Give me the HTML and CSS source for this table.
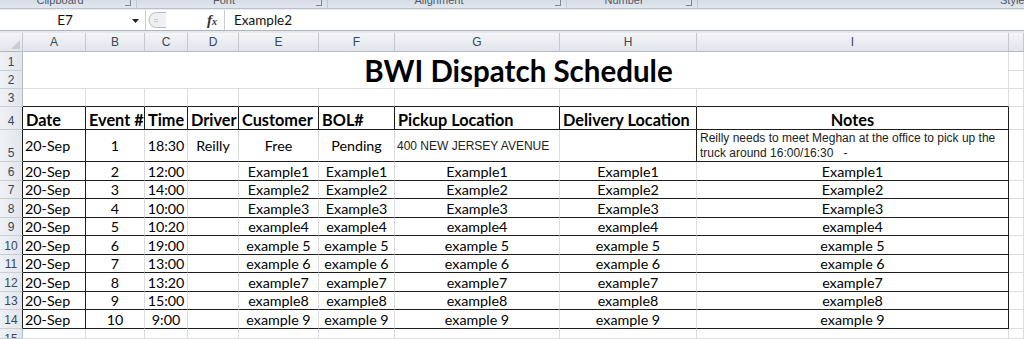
FILE: index.html
```html
<!DOCTYPE html>
<html>
<head>
<meta charset="utf-8">
<link rel="stylesheet" href="styles.css">
</head>
<body>
<div class="app">
  <div class="ribbon">
    <div class="grp g1"><span class="glabel">Clipboard</span><i class="launch"></i></div>
    <div class="grp g2"><span class="glabel">Font</span><i class="launch"></i></div>
    <div class="grp g3"><span class="glabel">Alignment</span><i class="launch"></i></div>
    <div class="grp g4"><span class="glabel">Number</span><i class="launch"></i></div>
    <div class="grp g5"><span class="glabel end">Styles</span></div>
  </div>
  <div class="fbar">
    <div class="namebox"><span class="nbtext">E7</span><svg class="nbarrow" width="7" height="4" viewBox="0 0 7 4"><path d="M0 0H7L3.5 4Z" fill="#222"/></svg></div>
    <div class="resizer"><svg width="20" height="18" viewBox="0 0 20 18"><path d="M19 1.5H9.5A7.5 7.5 0 0 0 9.5 16.5H19" fill="#eef0f3" stroke="#b3b9c2"/><path d="M7 8.5H11M7 10.5H11" stroke="#c3c8cf"/></svg></div>
    <div class="fx"><span class="fxf">f</span><span class="fxx">x</span></div>
    <div class="formula">Example2</div>
  </div>
  <div class="band"></div>
  <div class="sheet">
    <!-- column headers -->
    <div class="c corner"><svg class="tri" width="9" height="9" viewBox="0 0 9 9"><path d="M9 0V9H0Z" fill="#c9cdd3"/></svg></div>
    <div class="c ch">A</div><div class="c ch">B</div><div class="c ch">C</div><div class="c ch">D</div><div class="c ch">E</div><div class="c ch">F</div><div class="c ch">G</div><div class="c ch">H</div><div class="c ch">I</div><div class="c ch"></div>

    <!-- rows 1-2 -->
    <div class="c rh">1</div>
    <div class="c title">BWI Dispatch Schedule</div>
    <div class="c"></div>
    <div class="c rh">2</div>
    <div class="c"></div>

    <!-- row 3 -->
    <div class="c rh">3</div>
    <div class="c bb"></div><div class="c bb"></div><div class="c bb"></div><div class="c bb"></div><div class="c bb"></div><div class="c bb"></div><div class="c bb"></div><div class="c bb"></div><div class="c bb"></div><div class="c"></div>

    <!-- row 4 -->
    <div class="c rh rt">4</div>
    <div class="c hd bb br">Date</div><div class="c hd bb br">Event #</div><div class="c hd bb br">Time</div><div class="c hd bb br">Driver</div><div class="c hd bb br">Customer</div><div class="c hd bb br">BOL#</div><div class="c hd bb br">Pickup Location</div><div class="c hd bb br">Delivery Location</div><div class="c hd hdc bb br">Notes</div><div class="c"></div>

    <!-- row 5 -->
    <div class="c rh rt">5</div>
    <div class="c l bb br">20-Sep</div><div class="c bb">1</div><div class="c bb">18:30</div><div class="c bb">Reilly</div><div class="c bb">Free</div><div class="c bb">Pending</div><div class="c arial l bb">400 NEW JERSEY AVENUE</div><div class="c bb br"></div><div class="c arial note bb br">Reilly needs to meet Meghan at the office to pick up the truck around 16:00/16:30&nbsp;&nbsp;&nbsp;-</div><div class="c"></div>

    <!-- row 6 -->
    <div class="c rh rt">6</div>
    <div class="c l bb br">20-Sep</div><div class="c bb">2</div><div class="c bb">12:00</div><div class="c bb"></div><div class="c bb">Example1</div><div class="c bb">Example1</div><div class="c bb">Example1</div><div class="c bb">Example1</div><div class="c bb br">Example1</div><div class="c"></div>

    <!-- row 7 -->
    <div class="c rh rt">7</div>
    <div class="c l bb br">20-Sep</div><div class="c bb">3</div><div class="c bb">14:00</div><div class="c bb"></div><div class="c bb">Example2</div><div class="c bb">Example2</div><div class="c bb">Example2</div><div class="c bb">Example2</div><div class="c bb br">Example2</div><div class="c"></div>

    <!-- row 8 -->
    <div class="c rh rt">8</div>
    <div class="c l bb br">20-Sep</div><div class="c bb">4</div><div class="c bb">10:00</div><div class="c bb"></div><div class="c bb">Example3</div><div class="c bb">Example3</div><div class="c bb">Example3</div><div class="c bb">Example3</div><div class="c bb br">Example3</div><div class="c"></div>

    <!-- row 9 -->
    <div class="c rh rt">9</div>
    <div class="c l bb br">20-Sep</div><div class="c bb">5</div><div class="c bb">10:20</div><div class="c bb"></div><div class="c bb">example4</div><div class="c bb">example4</div><div class="c bb">example4</div><div class="c bb">example4</div><div class="c bb br">example4</div><div class="c"></div>

    <!-- row 10 -->
    <div class="c rh rt">10</div>
    <div class="c l bb br">20-Sep</div><div class="c bb">6</div><div class="c bb">19:00</div><div class="c bb"></div><div class="c bb">example 5</div><div class="c bb">example 5</div><div class="c bb">example 5</div><div class="c bb">example 5</div><div class="c bb br">example 5</div><div class="c"></div>

    <!-- row 11 -->
    <div class="c rh rt">11</div>
    <div class="c l bb br">20-Sep</div><div class="c bb">7</div><div class="c bb">13:00</div><div class="c bb"></div><div class="c bb">example 6</div><div class="c bb">example 6</div><div class="c bb">example 6</div><div class="c bb">example 6</div><div class="c bb br">example 6</div><div class="c"></div>

    <!-- row 12 -->
    <div class="c rh rt">12</div>
    <div class="c l bb br">20-Sep</div><div class="c bb">8</div><div class="c bb">13:20</div><div class="c bb"></div><div class="c bb">example7</div><div class="c bb">example7</div><div class="c bb">example7</div><div class="c bb">example7</div><div class="c bb br">example7</div><div class="c"></div>

    <!-- row 13 -->
    <div class="c rh rt">13</div>
    <div class="c l bb br">20-Sep</div><div class="c bb">9</div><div class="c bb">15:00</div><div class="c bb"></div><div class="c bb">example8</div><div class="c bb">example8</div><div class="c bb">example8</div><div class="c bb">example8</div><div class="c bb br">example8</div><div class="c"></div>

    <!-- row 14 -->
    <div class="c rh rt">14</div>
    <div class="c l bb br">20-Sep</div><div class="c bb">10</div><div class="c bb">9:00</div><div class="c bb"></div><div class="c bb">example 9</div><div class="c bb">example 9</div><div class="c bb">example 9</div><div class="c bb">example 9</div><div class="c bb br">example 9</div><div class="c"></div>

    <!-- row 15 -->
    <div class="c rh last">15</div>
    <div class="c"></div><div class="c"></div><div class="c"></div><div class="c"></div><div class="c"></div><div class="c"></div><div class="c"></div><div class="c"></div><div class="c"></div><div class="c"></div>
  </div>
</div>
</body>
</html>
```

FILE: styles.css
```css
html, body {
  margin: 0;
  padding: 0;
  overflow: hidden;
  background: #ffffff;
}

.app {
  width: 1024px;
  height: 339px;
  display: flex;
  flex-direction: column;
  font-family: "Lato", "Liberation Sans", sans-serif;
}

/* ribbon group footer strip */
.ribbon {
  height: 8px;
  flex: none;
  display: flex;
  background: linear-gradient(#d7dde6, #e2e7ee);
  border-bottom: 1px solid #b9c0ca;
  overflow: hidden;
}
.grp {
  position: relative;
  display: flex;
  justify-content: center;
  padding-right: 16px;
  border-right: 1px solid #c3cad3;
  box-sizing: border-box;
}
.g1 { width: 137px; }
.g2 { width: 191px; }
.g3 { width: 239px; }
.g4 { width: 131px; }
.g5 { flex: 1; border-right: none; padding-right: 0; justify-content: flex-end; }
.glabel {
  font-family: "Liberation Sans", sans-serif;
  font-size: 11px;
  line-height: 11px;
  color: #4f5967;
  margin-top: -5px;
}
.glabel.end { margin-right: -6px; }
.launch {
  position: absolute;
  right: 5px;
  top: 0;
  width: 5px;
  height: 5px;
  border-right: 1px solid #7e8896;
  border-bottom: 1px solid #7e8896;
}

/* formula bar */
.fbar {
  height: 21px;
  flex: none;
  display: flex;
  align-items: stretch;
  background: #ffffff;
  border-top: 1px solid #e9edf2;
  box-sizing: border-box;
  position: relative;
}
.namebox {
  width: 146px;
  flex: none;
  display: flex;
  align-items: center;
  border-right: 1px solid #c7ccd3;
  box-sizing: border-box;
}
.nbtext {
  flex: 1;
  text-align: center;
  font-family: "Lato", sans-serif;
  font-size: 13.5px;
  color: #111;
  padding-right: 2px;
}
.nbarrow {
  margin-right: 6px;
  margin-top: 2px;
}
.resizer {
  width: 78px;
  flex: none;
  display: flex;
  align-items: center;
  padding-left: 1px;
  box-sizing: border-box;
}
.fx {
  position: absolute;
  left: 207px;
  top: 2px;
  font-family: "Liberation Serif", serif;
  font-style: italic;
  font-weight: bold;
  color: #333;
  display: flex;
  align-items: baseline;
}
.fxf { font-size: 15px; }
.fxx { font-size: 10px; }
.formula {
  flex: 1;
  display: flex;
  align-items: center;
  padding-left: 9px;
  border-left: 1px solid #c7ccd3;
  font-family: "Lato", sans-serif;
  font-size: 13.5px;
  color: #111;
}

.band {
  height: 3px;
  flex: none;
  background: #e5e9ee;
  border-top: 1px solid #adb5bf;
  box-sizing: border-box;
}

/* sheet grid */
.sheet {
  flex: 1;
  display: grid;
  grid-template-columns: 23px 63px 59px 43px 51px 80px 76px 165px 137px 312px 1fr;
  grid-template-rows: 19px 19px 18px 18px 23px 32px 19px 18px 19px 18px 19px 18px 19px 18px 19px 1fr;
  overflow: hidden;
}
.c {
  box-sizing: border-box;
  border-right: 1px solid #dadcdf;
  border-bottom: 1px solid #dadcdf;
  display: flex;
  align-items: center;
  justify-content: center;
  white-space: nowrap;
  overflow: hidden;
  font-size: 14.3px;
  color: #000;
  min-width: 0;
}
.l { justify-content: flex-start; padding-left: 2px; }
.bb { border-bottom-color: #1e1e1e; }
.br { border-right-color: #1e1e1e; }

.corner {
  background: linear-gradient(#f2f4f7, #e3e7ec);
  border-right-color: #c2c8d0;
  border-bottom-color: #b3bbc5;
  align-items: flex-end;
  justify-content: flex-end;
  padding: 0 2px 2px 0;
}
.ch {
  background: linear-gradient(#f3f5f8, #e1e5eb);
  border-right-color: #c2c8d0;
  border-bottom-color: #b3bbc5;
  font-family: "Liberation Sans", sans-serif;
  font-size: 12px;
  color: #3a4658;
}
.rh {
  background: linear-gradient(90deg, #eef1f5, #e2e6ec);
  border-right-color: #b3bbc5;
  border-bottom-color: #c9ced6;
  font-family: "Liberation Sans", sans-serif;
  font-size: 12px;
  color: #3a4658;
  align-items: flex-end;
  padding-bottom: 1px;
}
.rh.rt { border-right-color: #1e1e1e; }
.rh.last { align-items: flex-start; padding-top: 3px; padding-bottom: 0; }

.title {
  grid-column: 2 / 11;
  grid-row: span 2;
  font-size: 29.5px;
  font-weight: bold;
  padding-left: 6px;
}

.hd {
  font-size: 16.3px;
  font-weight: bold;
  justify-content: flex-start;
  padding-left: 3px;
  padding-top: 2px;
}
.hdc { justify-content: center; padding-left: 0; }

.arial {
  font-family: "Liberation Sans", sans-serif;
  font-size: 12px;
  color: #222;
}
.note {
  white-space: normal;
  justify-content: flex-start;
  align-items: flex-start;
  padding: 1px 4px 0 3px;
  line-height: 15px;
}
```
